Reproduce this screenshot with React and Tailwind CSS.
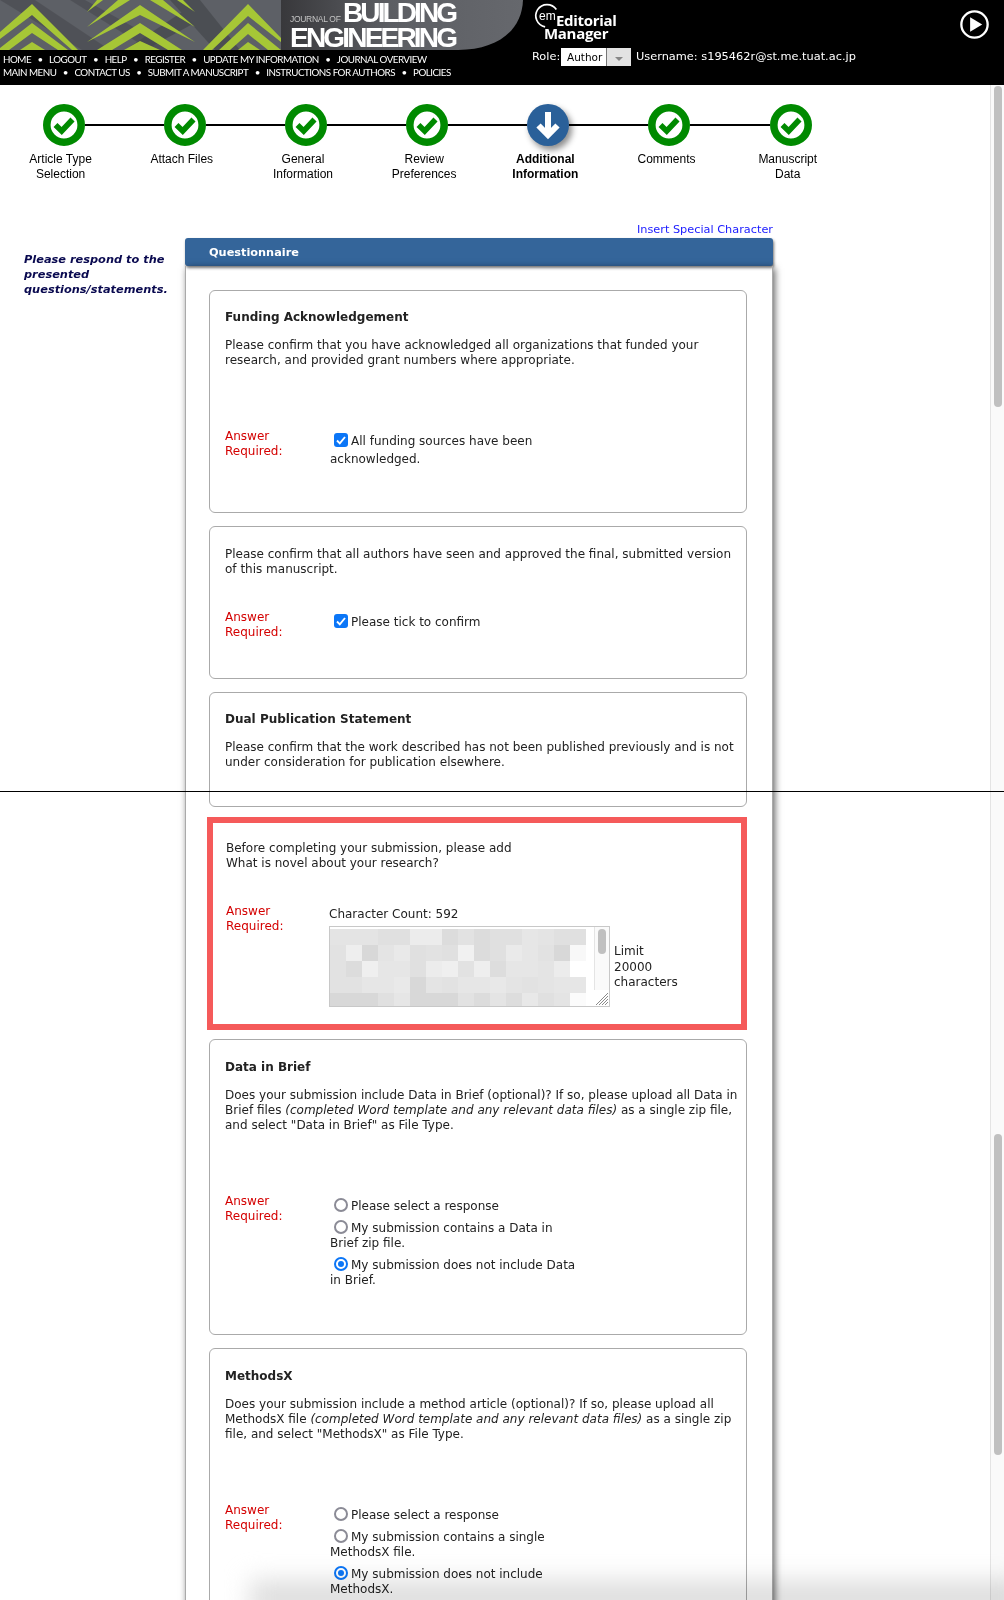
const STEPS = [
  { label: ["Article Type", "Selection"], done: true },
  { label: ["Attach Files"], done: true },
  { label: ["General", "Information"], done: true },
  { label: ["Review", "Preferences"], done: true },
  { label: ["Additional", "Information"], done: false },
  { label: ["Comments"], done: true },
  { label: ["Manuscript", "Data"], done: true },
];

const NAV_ROWS = [
  ["HOME", "LOGOUT", "HELP", "REGISTER", "UPDATE MY INFORMATION", "JOURNAL OVERVIEW"],
  ["MAIN MENU", "CONTACT US", "SUBMIT A MANUSCRIPT", "INSTRUCTIONS FOR AUTHORS", "POLICIES"],
];

// pixelated blur over the answer text, one row of grey values per band
const BLUR = [
  ["e4", "e4", "e4", "e0", "e0", "ec", "ec", "dc", "e2", "dc", "e0", "e0", "e6", "e4", "e0", "e0"],
  ["e2", "ee", "d8", "e4", "e9", "e0", "e2", "e0", "f1", "dc", "e0", "ea", "e6", "e2", "d8", "f8"],
  ["e2", "dc", "ef", "e6", "e6", "e0", "ec", "ef", "e2", "ee", "dd", "e6", "e6", "e4", "ec", "ff"],
  ["e2", "e2", "e6", "e6", "e9", "d8", "e4", "e2", "e6", "e6", "e8", "e4", "e2", "e4", "e6", "e6"],
  ["d8", "d8", "d8", "e0", "e6", "d8", "d8", "d8", "e2", "dc", "e4", "dd", "e8", "e0", "e4", "fb"],
];

const BigCheck = () => (
  <svg viewBox="0 0 42 42" className="h-[42px] w-[42px] shrink-0">
    <circle cx="21" cy="21" r="17.2" fill="#fff" stroke="#008a00" strokeWidth="7.6" />
    <path d="M12.5 21 L18.7 27 L29.5 15.5" fill="none" stroke="#008a00" strokeWidth="5.6" strokeLinejoin="miter" />
  </svg>
);

const BigArrow = () => (
  <div className="h-[42px] w-[42px] shrink-0 rounded-full bg-[#2a6099] shadow-[3px_4px_6px_rgba(0,0,0,0.45)]">
    <svg viewBox="0 0 42 42" className="h-[42px] w-[42px]">
      <path d="M21 8 L21 31 M11.5 21.5 L21 31 L30.5 21.5" fill="none" stroke="#fff" strokeWidth="6" />
    </svg>
  </div>
);

const Banner = () => (
  <div className="relative h-[50px] w-[523px] shrink-0 overflow-hidden">
    <svg viewBox="0 0 523 50" className="block h-[50px] w-[523px]">
      <defs>
        <linearGradient id="banner-fade" x1="0" x2="1" y1="0" y2="0">
          <stop offset="0" stopColor="#38383b" />
          <stop offset="0.45" stopColor="#5c5e63" />
          <stop offset="1" stopColor="#66686d" />
        </linearGradient>
      </defs>
      <rect x="0" y="0" width="281" height="50" fill="#5d6066" />
      <path d="M281 0 H523 C522 30 498 50 458 50 H281 Z" fill="url(#banner-fade)" />
      <path d="M35 0 L110 50 H82 L0 0 Z M85 0 L175 50 H150 L70 0 Z" fill="#4a4c51" opacity="0.7" />
      <path d="M200 0 L240 50 H215 L170 0 Z M125 50 L185 10 L200 20 L145 50 Z" fill="#45474b" opacity="0.7" />
      <g fill="#a6c636">
        <path d="M0 32 L32 4 L78 50 H72 L32 15 L0 39 Z" />
        <path d="M0 48 L32 23 L68 50 H58 L32 33 L9 50 H0 Z" />
        <path d="M20 50 L32 42 L45 50 Z" />
        <path d="M87 27 L130 0 H118 Z M87 12 L103 0 H97 Z" />
        <path d="M87 42 L140 5 L195 42 L140 15 Z" />
        <path d="M97 50 L140 23 L182 50 H168 L140 33 L112 50 Z" />
        <path d="M150 0 L195 27 L163 0 Z M177 0 L195 12 L183 0 Z" />
        <path d="M124 50 L140 41 L160 50 Z" />
        <path d="M203 50 L248 4 L281 38 V42 L248 16 L212 50 Z" />
        <path d="M219 50 L248 23 L281 50 H268 L248 34 L230 50 Z" />
        <path d="M238 50 L248 42 L260 50 Z" />
      </g>
    </svg>
    <span className="absolute left-[290px] top-[14px] font-['Liberation_Sans',sans-serif] text-[8.5px] leading-[10px] tracking-[-0.3px] text-[#c4c4c4]">
      JOURNAL OF
    </span>
    <span className="absolute left-[343px] top-0 font-['Liberation_Sans',sans-serif] text-[28px] leading-[25px] font-bold tracking-[-2.9px] text-white">
      BUILDING
    </span>
    <span className="absolute left-[290px] top-[25px] font-['Liberation_Sans',sans-serif] text-[28px] leading-[25px] font-bold tracking-[-2.8px] text-white">
      ENGINEERING
    </span>
  </div>
);

const Header = () => (
  <header className="flex h-[85px] bg-black text-white">
    <div className="w-[523px] shrink-0">
      <Banner />
      <nav className="pt-[3px] pl-[3px] font-['Lato',sans-serif] text-[9.8px] leading-[13px] tracking-[-0.5px]">
        {NAV_ROWS.map((row) => (
          <div key={row[0]} className="flex whitespace-nowrap">
            {row.map((item, i) => (
              <span key={item} className="flex">
                {i > 0 && <span className="w-[18px] text-center">•</span>}
                {item}
              </span>
            ))}
          </div>
        ))}
      </nav>
    </div>
    <div className="flex-1 pl-[9px]">
      <div className="relative h-[48px] w-[90px]">
        <svg viewBox="0 0 30 30" className="absolute left-[1px] top-[3px] h-[28px] w-[28px]">
          <path d="M25 7 A12 12 0 1 0 13 25.5" fill="none" stroke="#fff" strokeWidth="1.8" />
        </svg>
        <span className="absolute left-[7px] top-[10px] font-['Liberation_Sans',sans-serif] text-[12px] leading-[12px]">em</span>
        <span className="absolute left-[24px] top-[13.5px] font-['Open_Sans',sans-serif] text-[15px] leading-[13px] font-bold tracking-[-0.3px]">Editorial</span>
        <span className="absolute left-[12px] top-[26.5px] font-['Open_Sans',sans-serif] text-[15px] leading-[13px] font-bold tracking-[-0.3px]">Manager</span>
      </div>
      <div className="flex items-start text-[11.35px] leading-[16px]">
        <span className="w-[29px]">Role:</span>
        <div className="flex h-[18px] w-[70px] bg-white text-[10.5px] leading-[18px] text-black">
          <span className="w-[46px] border-r border-[#777] pl-[6px]">Author</span>
          <span className="flex flex-1 items-center justify-center bg-[#e3e3e3] pt-[3px]">
            <span className="h-0 w-0 border-x-[4px] border-t-[4px] border-x-transparent border-t-[#888]"></span>
          </span>
        </div>
        <span className="ml-[5px]">Username: s195462r@st.me.tuat.ac.jp</span>
      </div>
    </div>
    <svg viewBox="0 0 30 30" className="mt-[10px] mr-[15px] h-[29px] w-[29px]">
      <circle cx="15" cy="15" r="13.6" fill="none" stroke="#fff" strokeWidth="2.4" />
      <path d="M10.5 7.5 L23 15 L10.5 22.5 Z" fill="#fff" />
    </svg>
  </header>
);

const Stepper = () => (
  <section className="h-[137px] pt-[19px] font-['Liberation_Sans',sans-serif] text-[12px] leading-[15px] text-black">
    <div className="flex items-center pl-[43px]">
      {STEPS.map((step, i) => (
        <div key={step.label[0]} className="flex items-center">
          {i > 0 && <div className="h-[2px] w-[79.1px] bg-black"></div>}
          {step.done ? <BigCheck /> : <BigArrow />}
        </div>
      ))}
    </div>
    <div className="mt-[6px] flex">
      {STEPS.map((step) => (
        <div key={step.label[0]} className={`w-[121.2px] text-center ${step.done ? "" : "font-bold"}`}>
          {step.label.map((line) => (
            <div key={line}>{line}</div>
          ))}
        </div>
      ))}
    </div>
  </section>
);

const TickBox = () => (
  <span className="mr-[3px] ml-[4px] inline-block h-[14px] w-[14px] rounded-[3px] bg-[#0b76f7] align-[-2px]">
    <svg viewBox="0 0 14 14" className="block h-[14px] w-[14px]">
      <path d="M3 7.5 L5.8 10.3 L11 4" fill="none" stroke="#fff" strokeWidth="1.9" />
    </svg>
  </span>
);

const Radio = ({ on }) => (
  <span
    className={`mr-[3px] ml-[4px] inline-block h-[14px] w-[14px] rounded-full border-2 align-[-2px] ${
      on ? "border-[#0b76f7] bg-white p-[2px]" : "border-[#8b8b96] bg-white"
    }`}
  >
    {on && <span className="block h-[6px] w-[6px] rounded-full bg-[#0b76f7]"></span>}
  </span>
);

const AnswerLabel = () => (
  <div className="w-[105px] shrink-0 text-[#d40000]">
    Answer
    <br />
    Required:
  </div>
);

const RadioList = ({ items }) => (
  <div className="pt-[4px]">
    {items.map((item, i) => (
      <div key={i} className="mb-[6px]">
        <Radio on={i === items.length - 1} />
        {item[0]}
        {item[1] && <br />}
        {item[1]}
      </div>
    ))}
  </div>
);

const Card = ({ className, children }) => (
  <div className={`rounded-[6px] border border-[#aaa] pl-[15px] ${className}`}>{children}</div>
);

const Title = ({ children }) => <div className="mb-[13px] font-bold">{children}</div>;

const AnswerBox = () => (
  <div className="flex">
    <div className="relative h-[81px] w-[281px] overflow-hidden border border-[#c8c8c8] bg-white">
      {BLUR.map((row, r) => (
        <div key={r} className="flex h-[16px] first:mt-[2px]">
          {row.map((grey, c) => (
            <div key={c} className="w-[16px]" style={{ backgroundColor: `#${grey}${grey}${grey}` }}></div>
          ))}
        </div>
      ))}
      <div className="absolute top-0 right-0 bottom-0 w-[15px] border-l border-[#e4e4e4] bg-[#fafafa]">
        <div className="mx-auto mt-[2px] h-[25px] w-[8px] rounded-full bg-[#c0c0c0]"></div>
      </div>
      <svg viewBox="0 0 16 16" className="absolute right-0 bottom-0 h-[16px] w-[16px] bg-white">
        <path d="M3 15 L15 3 M6 15 L15 6 M9 15 L15 9 M12 15 L15 12" stroke="#8a8a8a" strokeWidth="1" />
      </svg>
    </div>
    <div className="pt-[18px] pl-[4px] leading-[15.5px]">
      Limit
      <br />
      20000
      <br />
      characters
    </div>
  </div>
);

const Questionnaire = () => (
  <div className="w-[588px]">
    <div className="text-right text-[11.3px] leading-[15px] text-[#1a1aff]">Insert Special Character</div>
    <div className="mt-px flex h-[28px] items-center rounded-[3px] bg-[#34659a] pl-[24px] text-[11.3px] font-bold text-white shadow-[1px_2px_3px_rgba(0,0,0,0.55)]">
      Questionnaire
    </div>
    <div className="h-[1400px] border-x border-[#aaa] pt-[24px] pr-[25px] pl-[23px] shadow-[2px_2px_7px_rgba(0,0,0,0.6)]">
      <Card className="h-[223px] pt-[19px]">
        <Title>Funding Acknowledgement</Title>
        <div>
          Please confirm that you have acknowledged all organizations that funded your
          <br />
          research, and provided grant numbers where appropriate.
        </div>
        <div className="mt-[61px] flex">
          <AnswerLabel />
          <div className="pt-[3px] leading-[18px]">
            <TickBox />
            All funding sources have been
            <br />
            acknowledged.
          </div>
        </div>
      </Card>

      <Card className="mt-[13px] h-[153px] pt-[20px]">
        <div>
          Please confirm that all authors have seen and approved the final, submitted version
          <br />
          of this manuscript.
        </div>
        <div className="mt-[33px] flex">
          <AnswerLabel />
          <div className="pt-[4px]">
            <TickBox />
            Please tick to confirm
          </div>
        </div>
      </Card>

      <Card className="mt-[13px] h-[115px] pt-[19px]">
        <Title>Dual Publication Statement</Title>
        <div>
          Please confirm that the work described has not been published previously and is not
          <br />
          under consideration for publication elsewhere.
        </div>
      </Card>

      <div className="mt-[10px] -ml-[2px] h-[213px] w-[540px] border-[6px] border-[#f55a5a] pt-[18px] pl-[13px]">
        <div>
          Before completing your submission, please add
          <br />
          What is novel about your research?
        </div>
        <div className="mt-[33px] flex">
          <AnswerLabel />
          <div className="-ml-[2px] pt-[3px]">
            <div className="mb-[4px]">Character Count: 592</div>
            <AnswerBox />
          </div>
        </div>
      </div>

      <Card className="mt-[9px] h-[296px] pt-[20px]">
        <Title>Data in Brief</Title>
        <div>
          Does your submission include Data in Brief (optional)? If so, please upload all Data in
          <br />
          Brief files <i>(completed Word template and any relevant data files)</i> as a single zip file,
          <br />
          and select "Data in Brief" as File Type.
        </div>
        <div className="mt-[61px] flex">
          <AnswerLabel />
          <RadioList
            items={[
              ["Please select a response"],
              ["My submission contains a Data in", "Brief zip file."],
              ["My submission does not include Data", "in Brief."],
            ]}
          />
        </div>
      </Card>

      <Card className="mt-[13px] h-[300px] pt-[20px]">
        <Title>MethodsX</Title>
        <div>
          Does your submission include a method article (optional)? If so, please upload all
          <br />
          MethodsX file <i>(completed Word template and any relevant data files)</i> as a single zip
          <br />
          file, and select "MethodsX" as File Type.
        </div>
        <div className="mt-[61px] flex">
          <AnswerLabel />
          <RadioList
            items={[
              ["Please select a response"],
              ["My submission contains a single", "MethodsX file."],
              ["My submission does not include", "MethodsX."],
            ]}
          />
        </div>
      </Card>
    </div>
  </div>
);

const App = () => (
  <div className="relative h-[1600px] w-[1004px] overflow-hidden bg-white font-['DejaVu_Sans',sans-serif] text-[12px] leading-[15px] text-[#222]">
    <Header />
    <Stepper />
    <main className="flex">
      <div className="w-[185px] shrink-0 pt-[30px] pl-[24px] text-[11.35px] font-bold text-[#0a0a50] italic">
        Please respond to the
        <br />
        presented
        <br />
        questions/statements.
      </div>
      <Questionnaire />
    </main>

    {/* stitched capture: the window scrollbar and the seam sit on top of the page */}
    <div className="absolute top-[85px] right-0 bottom-0 w-[14px] border-l border-[#e4e4e4] bg-[#fafafa]">
      <div className="absolute top-px left-[3px] h-[321px] w-[8px] rounded-full bg-[#c0c0c0]"></div>
      <div className="absolute top-[1049px] left-[3px] h-[321px] w-[8px] rounded-full bg-[#c0c0c0]"></div>
    </div>
    <div className="absolute top-[791px] right-0 left-0 h-px bg-black"></div>
    <div className="pointer-events-none absolute right-[-20px] bottom-[-16px] left-[250px] h-[36px] bg-[#dedede] mix-blend-multiply blur-md"></div>
  </div>
);

export default App;
